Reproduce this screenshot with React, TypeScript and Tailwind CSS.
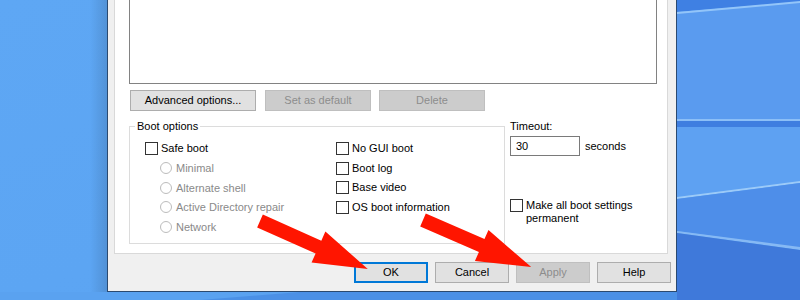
import React from "react";

const Btn = ({ label, w, disabled, primary }: { label: string; w: string; disabled?: boolean; primary?: boolean }) => (
  <div
    className={
      "h-[21px] flex items-center justify-center " +
      w +
      " " +
      (disabled
        ? "bg-[#cccccc] border border-[#bfbfbf] text-[#8c8c8c]"
        : primary
        ? "bg-[#e1e1e1] border-2 border-[#0078d7] text-black"
        : "bg-[#e1e1e1] border border-[#adadad] text-black")
    }
  >
    {label}
  </div>
);

const Check = ({ label }: { label: React.ReactNode }) => (
  <div className="flex items-start gap-[3px]">
    <div className="w-[13px] h-[13px] shrink-0 bg-white border border-[#333333]" />
    <div className="leading-[13px]">{label}</div>
  </div>
);

const Radio = ({ label }: { label: string }) => (
  <div className="h-[19.5px] flex items-center gap-[4px] pl-[15px] text-[#8a8a8a]">
    <div className="w-[12px] h-[12px] rounded-full border border-[#bcbcbc] bg-white" />
    <span>{label}</span>
  </div>
);

const Row = ({ children }: { children: React.ReactNode }) => (
  <div className="h-[19.5px] flex items-center">{children}</div>
);

const Desktop = () => (
  <svg className="absolute inset-0" width="800" height="300" viewBox="0 0 800 300">
    <defs>
      <linearGradient id="lg" x1="0" y1="0" x2="1" y2="1">
        <stop offset="0" stopColor="#5ea7f4" />
        <stop offset="1" stopColor="#5aa3f2" />
      </linearGradient>
      <linearGradient id="shade" x1="0" y1="0" x2="1" y2="0">
        <stop offset="0" stopColor="#000" stopOpacity="0" />
        <stop offset="1" stopColor="#000" stopOpacity="0.12" />
      </linearGradient>
    </defs>
    <rect width="800" height="300" fill="url(#lg)" />
    <rect x="90" y="0" width="17" height="300" fill="url(#shade)" />
    {/* right side panes */}
    <polygon points="677,0 800,0 800,2 677,12" fill="#3f80e3" />
    <polygon points="677,12 800,2 800,120 677,120" fill="#5a9bef" />
    <polygon points="677,12 800,1 800,3 677,14" fill="#93c5f9" />
    <rect x="677" y="119" width="123" height="2" fill="#8cbff7" />
    <rect x="677" y="121" width="123" height="6" fill="#3f7ee0" />
    <polygon points="677,127 800,127 800,181 677,197" fill="#5ea1f2" />
    <polygon points="677,197 800,181 800,183 677,199" fill="#9ccaf8" />
    <polygon points="677,199 800,183 800,248 677,231" fill="#4e8ee9" />
    <polygon points="677,231 800,247 800,250 677,233" fill="#86b9f4" />
    <polygon points="677,233 800,250 800,300 677,300" fill="#3f79da" />
    <polygon points="0,292 677,292 677,300 0,300" fill="#4b90e6" />
    <polygon points="0,292 300,292 200,300 0,300" fill="#5aa2f0" />
  </svg>
);

const Arrow = ({ x, y, a }: { x: number; y: number; a: number }) => (
  <polygon
    transform={`translate(${x} ${y}) rotate(${a})`}
    points="0,-7 64,-7 64,-17 118,0 64,17 64,7 0,7"
    fill="#ff1500"
  />
);

export default function App() {
  return (
    <div className="relative w-[800px] h-[300px] overflow-hidden font-['Liberation_Sans',Arial,sans-serif] text-[11px] text-black">
      <Desktop />
      <div className="relative ml-[107px] w-[570px] h-[292px] bg-[#f0f0f0] border-x border-b border-[#2b4a70] flex flex-col">
        <div className="ml-[6px] mr-[8px] h-[254px] bg-white border-x border-b border-[#d9d9d9] pl-[14px]">
          <div className="w-[528px] h-[84px] bg-white border-x border-b border-[#828282]" />
          <div className="mt-[6px] flex pl-[1px]">
            <Btn label="Advanced options..." w="w-[126px]" />
            <div className="ml-[9px]">
              <Btn label="Set as default" w="w-[106px]" disabled />
            </div>
            <div className="ml-[8px]">
              <Btn label="Delete" w="w-[106px]" disabled />
            </div>
          </div>
          <div className="flex items-start mt-[9px]">
            <fieldset className="w-[376px] h-[124px] border border-[#dcdcdc]">
              <legend className="ml-[5px] px-[2px] leading-[13px]">Boot options</legend>
              <div className="pt-[6px] pl-[15px] flex">
                <div className="w-[191px]">
                  <Row>
                    <Check label="Safe boot" />
                  </Row>
                  <Radio label="Minimal" />
                  <Radio label="Alternate shell" />
                  <Radio label="Active Directory repair" />
                  <Radio label="Network" />
                </div>
                <div>
                  <Row>
                    <Check label="No GUI boot" />
                  </Row>
                  <Row>
                    <Check label="Boot log" />
                  </Row>
                  <Row>
                    <Check label="Base video" />
                  </Row>
                  <Row>
                    <Check label="OS boot information" />
                  </Row>
                </div>
              </div>
            </fieldset>
            <div className="ml-[5px]">
              <div className="leading-[13px]">Timeout:</div>
              <div className="mt-[3px] flex items-center">
                <div className="w-[70px] h-[20px] border border-[#7a7a7a] bg-white pl-[5px] flex items-center">30</div>
                <span className="ml-[5px]">seconds</span>
              </div>
              <div className="mt-[43px]">
                <Check
                  label={
                    <>
                      Make all boot settings
                      <br />
                      permanent
                    </>
                  }
                />
              </div>
            </div>
          </div>
        </div>
        <div className="mt-[8px] mr-[5px] flex justify-end gap-[7px]">
          <Btn label="OK" w="w-[74px]" primary />
          <Btn label="Cancel" w="w-[74px]" />
          <Btn label="Apply" w="w-[74px]" disabled />
          <Btn label="Help" w="w-[74px]" />
        </div>
      </div>
      <svg className="absolute inset-0 pointer-events-none" width="800" height="300" viewBox="0 0 800 300">
        <Arrow x={260} y={221} a={24} />
        <Arrow x={423} y={220} a={23.5} />
      </svg>
    </div>
  );
}
